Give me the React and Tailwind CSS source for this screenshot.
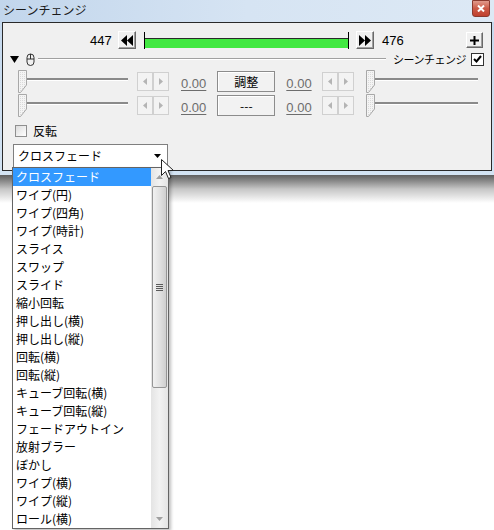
import React from 'react';

const ja = "font-['Noto_Sans_CJK_JP','Noto_Sans_CJK_SC',sans-serif]";
const num = "font-['Liberation_Sans',Arial,sans-serif]";

const effects = [
  'クロスフェード', 'ワイプ(円)', 'ワイプ(四角)', 'ワイプ(時計)', 'スライス', 'スワップ', 'スライド',
  '縮小回転', '押し出し(横)', '押し出し(縦)', '回転(横)', '回転(縦)', 'キューブ回転(横)',
  'キューブ回転(縦)', 'フェードアウトイン', '放射ブラー', 'ぼかし', 'ワイプ(横)', 'ワイプ(縦)', 'ロール(横)',
];

function RaisedButton({ className = '', children }) {
  return (
    <div className={`flex items-center justify-center bg-[#f0f0f0] border border-t-white border-l-white border-r-[#696969] border-b-[#696969] shadow-[inset_-1px_-1px_0_#a0a0a0] ${className}`}>
      {children}
    </div>
  );
}

function SpinPair() {
  return (
    <div className="flex h-[19px]">
      {['M4 0L0 3.5L4 7Z', 'M0 0L4 3.5L0 7Z'].map(d => (
        <div key={d} className="w-[16px] h-[19px] border border-[#d0d0d0] bg-[#f3f3f3] flex items-center justify-center">
          <svg width="4" height="7" viewBox="0 0 4 7"><path d={d} fill="#b4b4b4" /></svg>
        </div>
      ))}
    </div>
  );
}

function Slider({ width }) {
  return (
    <div className="relative h-[23px]" style={{ width }}>
      <div className="absolute left-[3px] right-0 top-[8px] h-[2px] bg-[#8a8a8a] border-b border-white box-content" />
      <svg className="absolute left-0 top-0" width="10" height="23" viewBox="0 0 10 23">
        <defs>
          <pattern id="dots" width="2" height="2" patternUnits="userSpaceOnUse">
            <rect width="2" height="2" fill="#f4f4f4" />
            <rect width="1" height="1" fill="#dadada" />
          </pattern>
        </defs>
        <path d="M0.5 0.5H8.5V15L2.5 22.5H0.5Z" fill="url(#dots)" stroke="#a8a8a8" />
      </svg>
    </div>
  );
}

function ValueLabel() {
  return <span className={`${num} text-[13px] leading-none text-[#6d6d6d] underline underline-offset-2 w-[26px]`}>0.00</span>;
}

function ParamRow({ label }) {
  return (
    <div className="flex items-center h-[23px]">
      <div className="ml-[15px]"><Slider width={110} /></div>
      <div className="ml-[9px]"><SpinPair /></div>
      <div className="ml-[12px]"><ValueLabel /></div>
      <div className="ml-[11px] w-[58px] h-[21px] border border-[#8c8c8c] bg-[#f2f2f2] shadow-[inset_1px_1px_0_#fff] flex items-center justify-center">
        <span className={`${ja} text-[12px] leading-none text-black`}>{label}</span>
      </div>
      <div className="ml-[11px]"><ValueLabel /></div>
      <div className="ml-[10px]"><SpinPair /></div>
      <div className="ml-[12px]"><Slider width={112} /></div>
    </div>
  );
}

export default function App() {
  return (
    <div className="relative w-[494px] h-[530px] bg-white overflow-hidden select-none">
      {/* window frame */}
      <div className="bg-gradient-to-b from-[#c3d7ed] to-[#d3e3f3] px-[2px] pb-[4px]">
        <div className="h-[22px] flex items-start justify-between bg-gradient-to-r from-[#c2d6ec] via-[#d6e4f3] to-[#dde9f5] -mx-[2px] px-[3px]">
          <span className={`${ja} text-[12px] leading-none mt-[4px] text-[#1a1a1a]`}>シーンチェンジ</span>
          <div className="mt-0 mr-[1px] w-[18px] h-[17px] rounded-b-[3px] border border-[#8b3a2f] bg-gradient-to-b from-[#e09a8c] via-[#cc5a47] to-[#c0402e] flex items-center justify-center">
            <svg width="8" height="7" viewBox="0 0 8 7"><path d="M1 0.5L7 6.5M7 0.5L1 6.5" stroke="#fff" strokeWidth="2" /></svg>
          </div>
        </div>

        <div className="h-[149px] border border-[#2a2a2a] bg-[#f0f0f0] flex flex-col">
          {/* frame range */}
          <div className="flex items-center h-[18px] mt-[8px]">
            <span className={`${num} text-[13px] leading-none text-black ml-[87px] w-[22px]`}>447</span>
            <RaisedButton className="ml-[6px] w-[18px] h-[18px]">
              <svg width="12" height="11" viewBox="0 0 12 11"><path d="M6 0L0 5.5L6 11ZM12 0L6 5.5L12 11Z" fill="#000" /></svg>
            </RaisedButton>
            <div className="ml-[8px] w-[205px] h-[17px] border-x border-black flex flex-col justify-end">
              <div className="h-[10px] bg-[#41e841] border-t border-[#2a2a2a] mb-[1px]" />
            </div>
            <RaisedButton className="ml-[7px] w-[18px] h-[18px]">
              <svg width="12" height="11" viewBox="0 0 12 11"><path d="M0 0L6 5.5L0 11ZM6 0L12 5.5L6 11Z" fill="#000" /></svg>
            </RaisedButton>
            <span className={`${num} text-[13px] leading-none text-black ml-[8px]`}>476</span>
            <RaisedButton className="ml-auto mr-[8px] w-[17px] h-[16px]">
              <svg width="9" height="9" viewBox="0 0 9 9"><path d="M4.5 0V9M0 4.5H9" stroke="#000" strokeWidth="2" /></svg>
            </RaisedButton>
          </div>

          {/* header line */}
          <div className="flex items-center h-[14px] mt-[3px]">
            <svg className="ml-[7px]" width="9" height="7" viewBox="0 0 9 7"><path d="M0 0H9L4.5 7Z" fill="#000" /></svg>
            <svg className="ml-[7px]" width="9" height="13" viewBox="0 0 9 13">
              <path d="M1 4.5A3.5 3.5 0 0 1 8 4.5V9A3.5 3.5 0 0 1 1 9Z M1 6H8 M4.5 1V6" fill="none" stroke="#333" strokeWidth="1" />
            </svg>
            <div className="ml-[3px] w-[348px] h-[2px] border-t border-[#a0a0a0] border-b border-b-white box-border" />
            <span className={`${ja} text-[11px] leading-none text-black ml-[7px] tracking-[-0.5px]`}>シーンチェンジ</span>
            <div className="ml-[5px] w-[13px] h-[13px] border border-[#333] bg-white flex items-center justify-center">
              <svg width="9" height="8" viewBox="0 0 9 8"><path d="M1 4L3.5 6.5L8 1" fill="none" stroke="#000" strokeWidth="2" /></svg>
            </div>
          </div>

          <div className="mt-[4px]"><ParamRow label="調整" /></div>
          <div className="mt-[1px]"><ParamRow label="---" /></div>

          {/* invert */}
          <div className="flex items-center h-[13px] mt-[7px] ml-[12px]">
            <div className="w-[12px] h-[12px] border border-[#8f8f8f] bg-gradient-to-br from-[#dcdcdc] to-white" />
            <span className={`${ja} text-[12px] leading-none text-black ml-[6px]`}>反転</span>
          </div>

          {/* combo */}
          <div className="ml-[10px] mt-[7px] w-[155px] h-[24px] border border-[#7f7f7f] bg-white flex items-center">
            <span className={`${ja} text-[12px] leading-none text-black ml-[4px]`}>クロスフェード</span>
            <svg className="ml-auto mr-[6px]" width="7" height="4" viewBox="0 0 7 4"><path d="M0 0H7L3.5 4Z" fill="#000" /></svg>
          </div>
        </div>
      </div>
      <div className="h-[28px] bg-gradient-to-b from-[#5f5f5f] via-[#c6c6c6] to-white" />

      {/* dropdown list */}
      <div className="absolute left-[12px] top-[167px] w-[157px] h-[362px] border border-[#646464] bg-white flex shadow-[2px_2px_3px_rgba(0,0,0,0.25)]">
        <div className="flex-1 flex flex-col">
          {effects.map((e, i) => (
            <div key={e} className={`h-[18px] flex items-center pl-[3px] ${i === 0 ? 'bg-[#3399ff] text-white' : 'text-black'}`}>
              <span className={`${ja} text-[12px] leading-none`}>{e}</span>
            </div>
          ))}
        </div>
        <div className="w-[17px] flex flex-col bg-gradient-to-r from-[#e4e4e4] via-[#f2f2f2] to-[#e4e4e4]">
          <div className="h-[18px] flex items-center justify-center">
            <svg width="7" height="4" viewBox="0 0 7 4"><path d="M0 4H7L3.5 0Z" fill="#a0a0a0" /></svg>
          </div>
          <div className="mx-[1px] h-[202px] rounded-[2px] border border-[#959595] bg-gradient-to-r from-[#f1f1f1] via-[#e2e2e2] to-[#cfcfcf] flex items-center justify-center">
            <svg width="7" height="7" viewBox="0 0 7 7"><path d="M0 0.5H7M0 2.5H7M0 4.5H7M0 6.5H7" stroke="#5a5a5a" strokeWidth="1" /></svg>
          </div>
          <div className="flex-1" />
          <div className="h-[18px] flex items-center justify-center">
            <svg width="7" height="4" viewBox="0 0 7 4"><path d="M0 0H7L3.5 4Z" fill="#a0a0a0" /></svg>
          </div>
        </div>
      </div>

      {/* mouse cursor */}
      <svg className="absolute left-[161px] top-[159px]" width="13" height="21" viewBox="0 0 13 21">
        <path d="M0.5 0.5V16.5L4.5 12.5L7.5 19.5L10 18.5L7 11.5H12.5Z" fill="#fff" stroke="#222" strokeWidth="1" strokeLinejoin="round" />
      </svg>
    </div>
  );
}
